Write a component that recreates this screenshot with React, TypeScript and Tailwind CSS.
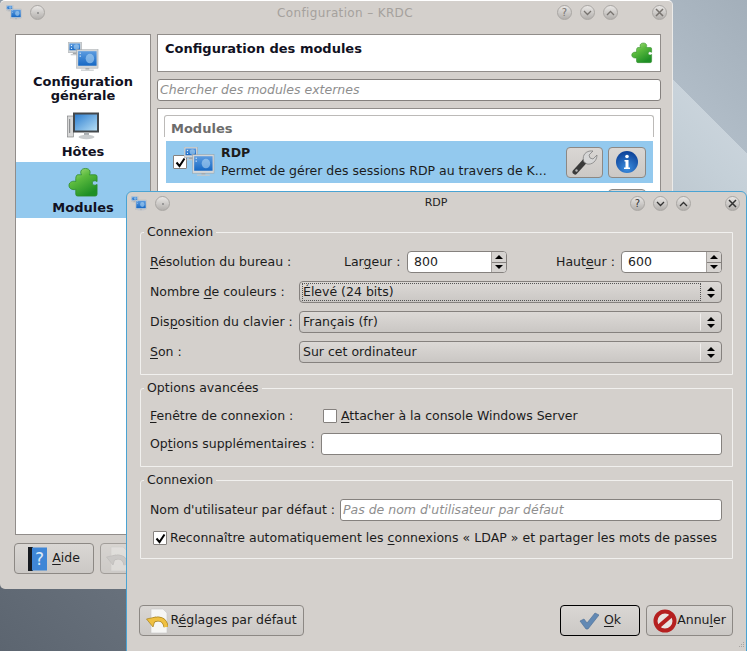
import type { ReactNode } from "react";

const dejavu = "font-['DejaVu_Sans',sans-serif]";

function Monitor({ x, y, w, h }: { x: number; y: number; w: number; h: number }) {
  return (
    <g>
      <rect x={x} y={y} width={w} height={h} fill="#d3d6d8" stroke="#9a9fa3" strokeWidth="0.5" />
      <rect x={x + 1.5} y={y + 1.5} width={w - 3} height={h - 4} fill="url(#screenGrad)" />
      <ellipse cx={x + w * 0.62} cy={y + h * 0.48} rx={w * 0.2} ry={h * 0.26} fill="#b9dcf5" opacity="0.55" />
      <rect x={x + 3} y={y + 3} width="1.200" height="1.200" fill="#e4f1fb" />
      <rect x={x + 3} y={y + 6} width="1.200" height="1.200" fill="#e4f1fb" />
      <rect x={x + w / 2 - 2} y={y + h} width="4" height="1.500" fill="#a4a8ab" />
      <rect x={x + w / 2 - w * 0.3} y={y + h + 1.500} width={w * 0.6} height="1.200" fill="#c6c9cb" />
    </g>
  );
}

function NetworkIcon({ size = 32 }: { size?: number }) {
  return (
    <svg width={size} height={size} viewBox="0 0 32 32">
      <defs>
        <linearGradient id="screenGrad" x1="0" y1="0" x2="0" y2="1">
          <stop offset="0" stopColor="#5d9ce0" />
          <stop offset="1" stopColor="#1668c4" />
        </linearGradient>
      </defs>
      <Monitor x={0} y={0} w={14} h={11} />
      <Monitor x={9} y={8} w={22} h={19} />
    </svg>
  );
}

function HostIcon() {
  return (
    <svg width="32" height="28" viewBox="0 0 32 28">
      <defs>
        <linearGradient id="hostScreen" x1="0" y1="0" x2="1" y2="1">
          <stop offset="0" stopColor="#2f7fd0" />
          <stop offset="1" stopColor="#b5def5" />
        </linearGradient>
      </defs>
      <rect x="0.500" y="4" width="6" height="21" fill="#d8d8d8" stroke="#77797b" strokeWidth="0.600" />
      <rect x="2" y="7" width="1.200" height="14" fill="#8d8f91" />
      <rect x="6" y="0.500" width="26" height="20" fill="#44484c" />
      <rect x="8" y="2.500" width="22" height="16" fill="url(#hostScreen)" />
      <rect x="17" y="20.500" width="5" height="3" fill="#a9adb0" />
      <ellipse cx="19.500" cy="25" rx="8" ry="2.200" fill="#c9ccce" />
    </svg>
  );
}

function Puzzle({ size = 32 }: { size?: number }) {
  return (
    <svg width={size} height={size} viewBox="0 0 32 32">
      <defs>
        <linearGradient id="puzzleGrad" x1="0" y1="0" x2="0.600" y2="1">
          <stop offset="0" stopColor="#b8e58e" />
          <stop offset="0.450" stopColor="#5cbb3e" />
          <stop offset="1" stopColor="#1e8f25" />
        </linearGradient>
      </defs>
      <path
        d="M10 8 h4 c-1.500-1.500-1.500-6.500 4-6.500 s5.500 5 4 6.500 h6 a2 2 0 0 1 2 2 v5 c-2-1.500-5-1-5 1.500 s3 3 5 1.500 v10 a2 2 0 0 1-2 2 h-18 a2 2 0 0 1-2-2 v-5 c-2 1-7 0-7-4 c0-4 5-5 7-4 v-3 c0-2 1-4 2-4 z"
        fill="url(#puzzleGrad)"
        stroke="#2c8a2a"
        strokeWidth="0.800"
      />
    </svg>
  );
}

function WrenchIcon() {
  return (
    <svg width="26" height="26" viewBox="0 0 26 26">
      <path d="M3 23 L13 12" stroke="#3a3a3a" strokeWidth="5" strokeLinecap="round" />
      <circle cx="4.500" cy="21.500" r="1.200" fill="#b5b5b5" />
      <path d="M12 13 C10 8 12 3 18 2 L21 2 L17 6 L18 9 L21 10 L25 6 C25 12 20 16 15 15 Z" fill="#d6d6d6" stroke="#777" strokeWidth="0.700" />
    </svg>
  );
}

function InfoIcon() {
  return (
    <svg width="24" height="24" viewBox="0 0 24 24">
      <defs>
        <radialGradient id="infoGrad" cx="0.500" cy="0.800" r="0.800">
          <stop offset="0" stopColor="#3d8fe0" />
          <stop offset="1" stopColor="#0b3f96" />
        </radialGradient>
      </defs>
      <circle cx="12" cy="12" r="11" fill="url(#infoGrad)" />
      <circle cx="12" cy="6.500" r="1.800" fill="#fff" />
      <path d="M9.500 10 h4 v7.500 h1.500 v1.500 h-6 v-1.500 h1.500 v-6 h-1 z" fill="#fff" />
    </svg>
  );
}

function HelpBook() {
  return (
    <svg width="19" height="24" viewBox="0 0 19 24">
      <rect x="0" y="0" width="5" height="24" fill="#161a20" />
      <rect x="4" y="0.500" width="15" height="23" fill="#3f86d6" />
      <text x="11.500" y="18" fontSize="17" fill="#dbe9f8" textAnchor="middle" fontFamily="DejaVu Sans">?</text>
    </svg>
  );
}

function UndoPage({ faded }: { faded?: boolean }) {
  const dark = faded ? "#9a9a9a" : "#a57f1c";
  const light = faded ? "#bdbdbd" : "#efc041";
  return (
    <svg width="22" height="26" viewBox="0 0 22 26" opacity={faded ? 0.5 : 1}>
      <path d="M5 1 H17 L21 5 V25 H5 Z" fill="#f6f6f4" stroke="#c8c8c6" strokeWidth="0.600" />
      <path d="M20 19 C19 11 12 9 6 13" fill="none" stroke={dark} strokeWidth="5" />
      <path d="M0.500 11 L10 9 L7 19 Z" fill={light} stroke={dark} strokeWidth="0.700" />
      <path d="M20 19 C19 11 12 9 6 13" fill="none" stroke={light} strokeWidth="3.600" />
    </svg>
  );
}

function OkCheck() {
  return (
    <svg width="20" height="18" viewBox="0 0 20 18">
      <path d="M1 9 L5 7 L8 11 L16 1 L20 3 L9 17 L7 17 Z" fill="#6289b4" stroke="#496c92" strokeWidth="0.600" />
    </svg>
  );
}

function StopIcon() {
  return (
    <svg width="24" height="24" viewBox="0 0 24 24">
      <circle cx="12" cy="12" r="9.500" fill="#e8e4e2" stroke="#b52020" strokeWidth="4" />
      <path d="M5 18 L19 6" stroke="#b52020" strokeWidth="4" />
    </svg>
  );
}

function WinBtn({ glyph, dark }: { glyph?: ReactNode; dark?: boolean }) {
  return (
    <span
      className={`flex h-[15px] w-[15px] items-center justify-center rounded-full border border-[#a9a6a3] bg-gradient-to-b from-[#e9e7e5] to-[#b3b0ad] text-[10px] leading-none ${dark ? "text-[#333]" : "text-[#77736f]"}`}
    >
      {glyph}
    </span>
  );
}

const chevDown = (
  <svg width="9" height="6" viewBox="0 0 9 6"><path d="M1 1 L4.500 4.500 L8 1" fill="none" stroke="currentColor" strokeWidth="1.300" /></svg>
);
const chevUp = (
  <svg width="9" height="6" viewBox="0 0 9 6"><path d="M1 5 L4.500 1.500 L8 5" fill="none" stroke="currentColor" strokeWidth="1.300" /></svg>
);
const closeX = (
  <svg width="9" height="9" viewBox="0 0 9 9"><path d="M1 1 L8 8 M8 1 L1 8" fill="none" stroke="currentColor" strokeWidth="1.500" /></svg>
);

function TitleBar({ title, dark }: { title: string; dark?: boolean }) {
  return (
    <div className="flex h-[21px] items-center">
      <NetworkIcon size={16} />
      <span className="ml-[8px]"><WinBtn glyph={<span className="h-[2px] w-[2px] rounded-full bg-[#888]" />} dark={dark} /></span>
      <span className={`flex-1 text-center ${dark ? "pl-[72px] text-[11px] text-[#222]" : "pl-[88px] text-[12px] tracking-[0.35px] text-[#a5a19d]"}`}>{title}</span>
      <span className="flex gap-2">
        <WinBtn glyph="?" dark={dark} />
        <WinBtn glyph={chevDown} dark={dark} />
        <WinBtn glyph={chevUp} dark={dark} />
      </span>
      <span className="ml-[34px]"><WinBtn glyph={closeX} dark={dark} /></span>
    </div>
  );
}

function Btn({ children, className = "" }: { children: ReactNode; className?: string }) {
  return (
    <button className={`flex h-[31px] items-center justify-center rounded-[4px] border border-[#8c8884] bg-gradient-to-b from-[#dad7d4] to-[#cbc8c5] ${className}`}>
      {children}
    </button>
  );
}

function Combo({ value, focused }: { value: string; focused?: boolean }) {
  return (
    <div className="flex h-[22px] w-[423px] items-center rounded-[4px] border border-[#85817e] bg-gradient-to-b from-[#dcd9d6] to-[#cac7c4] pl-[2px]">
      <span className={`flex h-[18px] flex-1 items-center border ${focused ? "border-dotted border-[#555]" : "border-transparent border-r-[#efedeb]"}`}>{value}</span>
      <span className="flex w-[20px] flex-col items-center gap-[3px]">
        <span className="h-0 w-0 border-x-[4px] border-b-[4px] border-x-transparent border-b-black" />
        <span className="h-0 w-0 border-x-[4px] border-t-[4px] border-x-transparent border-t-black" />
      </span>
    </div>
  );
}

function Spin({ value, className = "" }: { value: string; className?: string }) {
  return (
    <div className={`flex h-[22px] items-center overflow-hidden rounded-[4px] border border-[#85817e] bg-white ${className}`}>
      <span className="flex-1 pl-[6px]">{value}</span>
      <span className="flex h-full w-[15px] flex-col border-l border-[#a5a19e] bg-[#d6d3d0]">
        <span className="flex flex-1 items-center justify-center border-b border-[#85817e]">
          <span className="h-0 w-0 border-x-[4px] border-b-[4px] border-x-transparent border-b-black" />
        </span>
        <span className="flex flex-1 items-center justify-center">
          <span className="h-0 w-0 border-x-[4px] border-t-[4px] border-x-transparent border-t-black" />
        </span>
      </span>
    </div>
  );
}

function Group({ title, children, className = "" }: { title: string; children: ReactNode; className?: string }) {
  return (
    <fieldset className={`rounded-tl-[3px] border border-[#f1f0ee] pl-[9px] pr-[10px] ${className}`}>
      <legend className="-ml-[6px] px-[3px] leading-[16px]">{title}</legend>
      {children}
    </fieldset>
  );
}

function CheckBox({ checked }: { checked?: boolean }) {
  return (
    <span className="flex h-[14px] w-[14px] shrink-0 items-center justify-center rounded-[1px] border border-[#85817e] bg-white">
      {checked && (
        <svg width="11" height="11" viewBox="0 0 11 11"><path d="M1.500 5.500 L4.500 9 L9.500 1.500" fill="none" stroke="#000" strokeWidth="2" /></svg>
      )}
    </span>
  );
}

function SideItem({ label, icon, active, className = "" }: { label: ReactNode; icon: ReactNode; active?: boolean; className?: string }) {
  return (
    <div className={`flex flex-col items-center text-center text-[13px] font-bold leading-[14px] text-[#111122] ${active ? "bg-[#93c9ee]" : ""} ${className}`}>
      {icon}
      <div className="mt-[3px]">{label}</div>
    </div>
  );
}

export default function App() {
  return (
    <div className={`relative h-[651px] w-[747px] overflow-hidden bg-[linear-gradient(45deg,#5c6570_0%,#68717c_14%,#c5d0d8_86%,#c9d3db_89%,#b0bcc7_89%,#a3afba_100%)] text-[12.500px] text-[#1c1c1c] ${dejavu}`}>
      {/* main window */}
      <div className="absolute left-0 top-0 flex h-[589px] w-[673px] flex-col rounded-[5px] border-r border-t border-r-[#ecebe9] border-t-white bg-[#d4d0cc] pl-[6px] pr-[5px] pt-[1px]">
        <TitleBar title="Configuration – KRDC" />
        <div className="mt-[11px] flex flex-1 gap-[6px] pl-[9px] pr-[6px]">
          <div className="flex h-[501px] w-[136px] shrink-0 flex-col border border-[#918d8a] bg-white">
            <SideItem className="h-[72px] pt-[7px]" icon={<NetworkIcon size={31} />} label={<span className="relative -top-[1px]">Configuration<br />générale</span>} />
            <SideItem className="h-[55px] pt-[5px]" icon={<HostIcon />} label={<span className="relative top-[2px]">Hôtes</span>} />
            <SideItem active className="h-[56px] pt-[5px]" icon={<Puzzle size={31} />} label="Modules" />
          </div>
          <div className="flex h-[501px] flex-1 flex-col gap-[7px]">
            <div className="flex h-[38px] justify-between border border-[#918d8a] bg-white pl-[7px] pr-[7px] pt-[7px]">
              <span className="text-[13px] font-bold leading-[14px] text-[#111122]">Configuration des modules</span>
              <Puzzle size={22} />
            </div>
            <div className="flex h-[22px] items-center rounded-[3px] border border-[#85817e] bg-white pl-[2px] italic text-[#8e8e8e]">
              Chercher des modules externes
            </div>
            <div className="flex-1 overflow-hidden border border-[#918d8a] bg-white px-[6px] pt-[6px]">
              <div className="flex h-[22px] items-end rounded-t-[3px] border-x border-t border-[#bcbab8] pb-[1px] pl-[6px] text-[13px] font-bold leading-[14px] text-[#6c6c6c]">Modules</div>
              <div className="ml-[2px] mr-[1px] mt-[4px] flex h-[42px] items-center bg-[#93c9ee] pl-[7px] pr-[7px]">
                <CheckBox checked />
                <span className="-ml-[3px]"><NetworkIcon size={31} /></span>
                <div className="ml-[6px] flex-1 leading-[18px]">
                  <div className="font-bold">RDP</div>
                  <div>Permet de gérer des sessions RDP au travers de K...</div>
                </div>
                <div className="flex gap-[5px]">
                  <Btn className="w-[37px]"><WrenchIcon /></Btn>
                  <Btn className="w-[38px]"><InfoIcon /></Btn>
                </div>
              </div>
              <div className="ml-[2px] mr-[1px] mt-[6px] flex h-[42px] items-start justify-between pl-[8px] pr-[7px]">
                <span className="ml-[46px] font-bold leading-[14px]">Test</span>
                <Btn className="w-[38px]"> </Btn>
              </div>
            </div>
          </div>
        </div>
        <div className="mb-[15px] ml-[8px] flex gap-[6px]">
          <Btn className="w-[80px] gap-[5px]"><HelpBook /><span><u className="underline-offset-2">A</u>ide</span></Btn>
          <Btn className="w-[80px] !justify-start pl-[5px] opacity-70"><UndoPage faded /></Btn>
        </div>
      </div>

      {/* dialog */}
      <div className="absolute left-[126px] top-[191px] flex h-[470px] w-[621px] flex-col rounded-l-[6px] rounded-tr-[6px] border border-[#4aa3d3] bg-[#d4d0cc] pl-[4px] pr-[6px] pt-[1px]">
        <TitleBar title="RDP" dark />
        <div className="ml-[9px] mr-[8px] mt-[10px] flex flex-col gap-[5px]">
          <Group title="Connexion" className="h-[151px]">
            <div className="mt-[11px] flex h-[22px] items-center">
              <span className="w-[194px]"><u className="underline-offset-2">R</u>ésolution du bureau :</span>
              <span className="w-[63px]">Lar<u className="underline-offset-2">g</u>eur :</span>
              <Spin value="800" className="w-[100px]" />
              <span className="ml-[49px] w-[65px]">Haut<u className="underline-offset-2">e</u>ur :</span>
              <Spin value="600" className="w-[101px]" />
            </div>
            <div className="mt-[8px] flex h-[22px] items-center">
              <span className="w-[149px]">Nombre <u className="underline-offset-2">d</u>e couleurs :</span>
              <Combo value="Élevé (24 bits)" focused />
            </div>
            <div className="mt-[8px] flex h-[22px] items-center">
              <span className="w-[149px]">Dis<u className="underline-offset-2">p</u>osition du clavier :</span>
              <Combo value="Français (fr)" />
            </div>
            <div className="mt-[8px] flex h-[22px] items-center">
              <span className="w-[149px]"><u className="underline-offset-2">S</u>on :</span>
              <Combo value="Sur cet ordinateur" />
            </div>
          </Group>
          <Group title="Options avancées" className="h-[87px]">
            <div className="mt-[9px] flex h-[22px] items-center">
              <span className="w-[173px]"><u className="underline-offset-2">F</u>enêtre de connexion :</span>
              <CheckBox />
              <span className="ml-[4px]"><u className="underline-offset-2">A</u>ttacher à la console Windows Server</span>
            </div>
            <div className="mt-[6px] flex h-[22px] items-center">
              <span className="w-[171px]">Op<u className="underline-offset-2">t</u>ions supplémentaires :</span>
              <div className="h-[22px] w-[401px] rounded-[3px] border border-[#85817e] bg-white" />
            </div>
          </Group>
          <Group title="Connexion" className="h-[87px]">
            <div className="mt-[11px] flex h-[22px] items-center">
              <span className="w-[190px]">Nom d'utilisateur par défaut :</span>
              <div className="flex h-[22px] w-[382px] items-center rounded-[3px] border border-[#85817e] bg-white pl-[2px] italic text-[#8e8e8e]">Pas de nom d'utilisateur par défaut</div>
            </div>
            <div className="mt-[8px] flex items-center gap-[3px] pl-[3px]">
              <CheckBox checked />
              <span className="tracking-[0.02px]">Reconnaître automatiquement les <u className="underline-offset-2">c</u>onnexions « LDAP » et partager les mots de passes</span>
            </div>
          </Group>
        </div>
        <div className="ml-[8px] mr-[7px] mt-[46px] flex items-center">
          <Btn className="w-[165px] gap-[2px]"><UndoPage /><span>R<u className="underline-offset-2">é</u>glages par défaut</span></Btn>
          <Btn className="ml-auto w-[80px] gap-[5px] !border-black"><OkCheck /><span><u className="underline-offset-2">O</u>k</span></Btn>
          <Btn className="ml-[6px] w-[87px]"><StopIcon /><span>Annu<u className="underline-offset-2">l</u>er</span></Btn>
        </div>
        {/* resize grip */}
        <svg className="absolute left-[612px] top-[450px]" width="6" height="6" viewBox="0 0 6 6">
          <rect x="4" y="0" width="1" height="1" fill="#a8a5a2" />
          <rect x="2" y="2" width="1" height="1" fill="#a8a5a2" />
          <rect x="4" y="2" width="1" height="1" fill="#a8a5a2" />
          <rect x="0" y="4" width="1" height="1" fill="#a8a5a2" />
          <rect x="2" y="4" width="1" height="1" fill="#a8a5a2" />
          <rect x="4" y="4" width="1" height="1" fill="#a8a5a2" />
        </svg>
      </div>
    </div>
  );
}
